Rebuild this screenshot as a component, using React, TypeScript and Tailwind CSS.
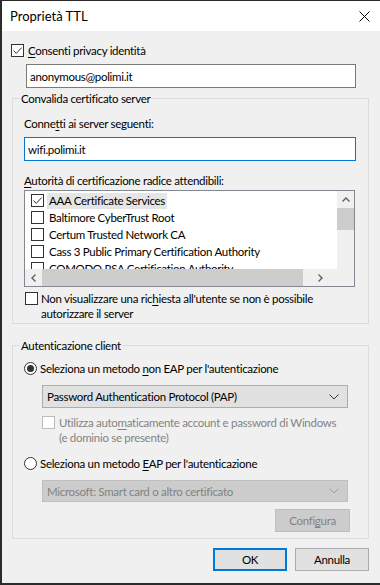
import React from "react";

function Box({ checked = false, disabled = false }: { checked?: boolean; disabled?: boolean }) {
  return (
    <span
      className={`flex h-[13px] w-[13px] shrink-0 items-center justify-center border bg-white ${
        disabled ? "border-[#bcbcbc]" : "border-[#333333]"
      }`}
    >
      {checked && (
        <svg width="11" height="11" viewBox="0 0 11 11">
          <path d="M1.5 5.5 L4.3 8.4 L9.6 2.6" fill="none" stroke="#333" strokeWidth="1" />
        </svg>
      )}
    </span>
  );
}

function Radio({ on = false }: { on?: boolean }) {
  return (
    <span className="flex h-[13px] w-[13px] shrink-0 items-center justify-center rounded-full border border-[#333333] bg-white">
      {on && <span className="h-[7px] w-[7px] rounded-full bg-[#333333]" />}
    </span>
  );
}

function Chevron({ color = "#333" }: { color?: string }) {
  return (
    <svg width="10" height="6" viewBox="0 0 10 6">
      <path d="M0.5 0.5 L5 5 L9.5 0.5" fill="none" stroke={color} strokeWidth="1" />
    </svg>
  );
}

const certs = [
  { name: "AAA Certificate Services", checked: true, sel: true },
  { name: "Baltimore CyberTrust Root" },
  { name: "Certum Trusted Network CA" },
  { name: "Cass 3 Public Primary Certification Authority" },
  { name: "COMODO RSA Certification Authority" },
];

export default function App() {
  return (
    <div className="h-[585px] w-[380px] overflow-hidden border-b-2 border-l-2 border-t border-[#2b2b2b] bg-[#f0f0f0] font-['Lato',sans-serif] text-[11.5px] leading-[15px] tracking-[-0.3px] text-black">
      {/* title bar */}
      <div className="flex h-[30px] items-center justify-between bg-white pl-[8px] pr-[10px] text-[13px] tracking-normal">
        <span>Proprietà TTL</span>
        <svg width="11" height="11" viewBox="0 0 11 11">
          <path d="M0.5 0.5 L10.5 10.5 M10.5 0.5 L0.5 10.5" stroke="#000" strokeWidth="1" />
        </svg>
      </div>

      <div className="flex flex-col">
        <div className="ml-[9px] mt-[13px] flex h-[13px] items-center gap-[4px]">
          <Box checked />
          <span>
            <u className="underline-offset-[2px]">C</u>onsenti privacy identità
          </span>
        </div>

        <div className="ml-[24px] mt-[7px] flex h-[24px] w-[330px] items-center border border-[#7a7a7a] bg-white pl-[3px]">
          anonymous@polimi.it
        </div>

        {/* server validation */}
        <fieldset className="ml-[10px] mt-[3px] h-[233px] w-[357px] border border-[#dcdcdc] pl-[11px]">
          <legend className="-ml-[4px] px-[1px]">Convalida certificato server</legend>
          <div className="mt-[10px]">
            Conne<u className="underline-offset-[2px]">t</u>ti ai server seguenti:
          </div>
          <div className="mt-[6px] flex h-[24px] w-[332px] items-center border border-[#0078d7] bg-white pl-[3px]">
            wifi.polimi.it
          </div>
          <div className="mt-[12px]">
            <u className="underline-offset-[2px]">A</u>utorità di certificazione radice attendibili:
          </div>

          <div className="mt-[2px] grid h-[97px] w-[331px] grid-cols-[1fr_17px] grid-rows-[1fr_17px] border border-[#828790] bg-white">
            <div className="overflow-hidden pt-[1px]">
              {certs.map((c) => (
                <div key={c.name} className="flex h-[17px] items-center gap-[3px] whitespace-nowrap pl-[6px]">
                  <Box checked={c.checked} />
                  <span className={`px-[2px] leading-[16px] ${c.sel ? "bg-[#e5e5e5]" : ""}`}>{c.name}</span>
                </div>
              ))}
            </div>
            <div className="flex flex-col bg-[#f0f0f0]">
              <div className="flex h-[17px] items-center justify-center">
                <svg width="8" height="5" viewBox="0 0 8 5">
                  <path d="M0.5 4.5 L4 1 L7.5 4.5" fill="none" stroke="#606060" strokeWidth="1.4" />
                </svg>
              </div>
              <div className="h-[22px] bg-[#cdcdcd]" />
            </div>
            <div className="flex items-center bg-[#f0f0f0]">
              <div className="flex h-[17px] w-[17px] items-center justify-center">
                <svg width="5" height="8" viewBox="0 0 5 8">
                  <path d="M4.5 0.5 L1 4 L4.5 7.5" fill="none" stroke="#606060" strokeWidth="1.4" />
                </svg>
              </div>
              <div className="h-[17px] w-[261px] bg-[#cdcdcd]" />
              <div className="flex h-[17px] flex-1 items-center justify-center">
                <svg width="5" height="8" viewBox="0 0 5 8">
                  <path d="M0.5 0.5 L4 4 L0.5 7.5" fill="none" stroke="#606060" strokeWidth="1.4" />
                </svg>
              </div>
            </div>
            <div className="bg-[#f0f0f0]" />
          </div>

          <div className="ml-[1px] mt-[5px] flex items-start gap-[3px]">
            <Box />
            <span className="-mt-[1px]">
              Non visualizzare una ric<u className="underline-offset-[2px]">h</u>iesta all'utente se non è possibile
              <br />
              autorizzare il server
            </span>
          </div>
        </fieldset>

        {/* client auth */}
        <fieldset className="ml-[10px] mt-[14px] h-[201px] w-[357px] border border-[#dcdcdc] pl-[11px]">
          <legend className="-ml-[4px] px-[1px]">Autenticazione client</legend>
          <div className="mt-[9px] flex h-[13px] items-center gap-[3px]">
            <Radio on />
            <span>
              Seleziona un metodo <u className="underline-offset-[2px]">n</u>on EAP per l'autenticazione
            </span>
          </div>
          <div className="ml-[18px] mt-[10px] flex h-[23px] w-[306px] items-center justify-between border border-[#adadad] bg-[#e1e1e1] pl-[4px] pr-[8px]">
            <span>Password Authentication Protocol (PAP)</span>
            <Chevron />
          </div>
          <div className="ml-[18px] mt-[8px] flex h-[30px] items-start gap-[4px] text-[#838383]">
            <Box disabled />
            <span className="-mt-[1px]">
              Utilizza auto<u className="underline-offset-[2px]">m</u>aticamente account e password di Windows
              <br />
              (e dominio se presente)
            </span>
          </div>
          <div className="mt-[11px] flex h-[13px] items-center gap-[3px]">
            <Radio />
            <span>
              Seleziona un metodo <u className="underline-offset-[2px]">E</u>AP per l'autenticazione
            </span>
          </div>
          <div className="ml-[18px] mt-[10px] flex h-[22px] w-[306px] items-center justify-between border border-[#bfbfbf] bg-[#cccccc] pl-[4px] pr-[8px] text-[#838383]">
            <span>Microsoft: Smart card o altro certificato</span>
            <Chevron color="#a0a0a0" />
          </div>
          <div className="ml-[251px] mt-[7px] flex h-[23px] w-[75px] items-center justify-center border border-[#bfbfbf] bg-[#cccccc] text-[#838383]">
            <span>
              Confi<u className="underline-offset-[2px]">g</u>ura
            </span>
          </div>
        </fieldset>

        <div className="mt-[9px] flex justify-end gap-[8px] pr-[11px]">
          <div className="flex h-[23px] w-[74px] items-center justify-center border-2 border-[#0078d7] bg-[#e1e1e1]">OK</div>
          <div className="flex h-[23px] w-[74px] items-center justify-center border border-[#adadad] bg-[#e1e1e1]">Annulla</div>
        </div>
      </div>
    </div>
  );
}
